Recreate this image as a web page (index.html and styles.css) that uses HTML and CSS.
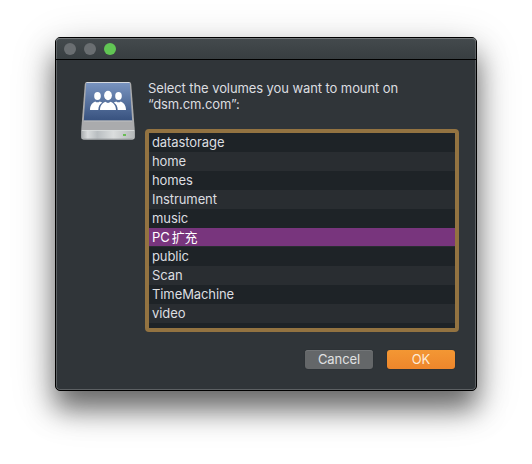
FILE: index.html
```html
<!DOCTYPE html>
<html lang="en">
<head>
<meta charset="utf-8">
<title>Select volumes</title>
<link rel="stylesheet" href="styles.css">
</head>
<body>
<main class="window">
  <header class="titlebar">
    <span class="light"></span>
    <span class="light"></span>
    <span class="light light-zoom"></span>
  </header>
  <div class="content">
    <svg class="drive" width="56" height="62" viewBox="0 0 56 62" aria-hidden="true">
      <defs>
        <linearGradient id="label" x1="0" y1="0" x2="0" y2="1">
          <stop offset="0" stop-color="#7893bf"/>
          <stop offset="1" stop-color="#38527f"/>
        </linearGradient>
        <linearGradient id="front" x1="0" y1="0" x2="1" y2="0">
          <stop offset="0" stop-color="#a9adaf"/>
          <stop offset=".12" stop-color="#d9dcdd"/>
          <stop offset=".3" stop-color="#b9bec1"/>
          <stop offset=".6" stop-color="#dadddd"/>
          <stop offset="1" stop-color="#b4b8b9"/>
        </linearGradient>
      </defs>
      <path d="M7 2H49Q51 2 51.200 4L54.700 49V57Q54.700 59.500 52 59.500H4Q1.300 59.500 1.300 57V49L4.800 4Q5 2 7 2Z" fill="#aaabad"/>
      <path d="M6.500 2.500H49.500" stroke="#d4d8de"/>
      <path d="M6.200 3H49.800L52.200 40.500H3.800Z" fill="url(#label)"/>
      <path d="M4 41H52" stroke="#c7c9cc" stroke-width=".7"/>
      <path d="M1.300 50H54.700V57Q54.700 59.500 52 59.500H4Q1.300 59.500 1.300 57Z" fill="url(#front)"/>
      <path d="M2 50.500H54" stroke="#dcdfe0" stroke-width=".8"/>
      <path d="M3.500 59.100H52.500" stroke="#8b9092" stroke-width=".8"/>
      <rect x="43" y="54" width="3" height="2" fill="#69bd55"/>
      <g fill="#fff">
        <ellipse cx="17.500" cy="16" rx="3.300" ry="4"/>
        <ellipse cx="38.500" cy="16" rx="3.300" ry="4"/>
        <path d="M10 30C10 24.500 13 22.500 15.200 21.500Q17.500 23.200 19.800 21.500L22.200 22.600C19.500 24.500 18.500 26.500 18.300 30Z"/>
        <path d="M46 30C46 24.500 43 22.500 40.800 21.500Q38.500 23.200 36.200 21.500L33.800 22.600C36.500 24.500 37.500 26.500 37.700 30Z"/>
        <ellipse cx="28" cy="15.500" rx="3.900" ry="4.700"/>
        <path d="M20 30C20 25 23 23 25.300 21.800Q28 24 30.700 21.800C33 23 36 25 36 30Z"/>
      </g>
    </svg>
    <section class="main">
      <p class="prompt">Select the volumes you want to mount on<br>“dsm.cm.com”:</p>
      <ul class="volumes">
        <li>datastorage</li>
        <li>home</li>
        <li>homes</li>
        <li>Instrument</li>
        <li>music</li>
        <li class="selected">PC<span class="cjk">扩充</span></li>
        <li>public</li>
        <li>Scan</li>
        <li>TimeMachine</li>
        <li>video</li>
      </ul>
      <div class="actions">
        <button class="button">Cancel</button>
        <button class="button button-primary">OK</button>
      </div>
    </section>
  </div>
</main>
</body>
</html>
```

FILE: styles.css
```css
* { box-sizing: border-box; }

body {
  margin: 0;
  height: 464px;
  padding: 37px 55px;
  overflow: hidden;
  background: #fff;
  color: #dcdee0;
  font: 13px/16px Inter, "Noto Sans CJK SC", sans-serif;
  letter-spacing: -.09px;
}

.window {
  width: 422px;
  height: 354px;
  border: 1px solid #000;
  border-radius: 5px;
  background: #303539;
  box-shadow: inset 0 0 0 1px #5c6063, 0 18px 27px rgba(0, 0, 0, .5), 0 12px 45px rgba(0, 0, 0, .22);
}

.titlebar {
  display: flex;
  gap: 8px;
  height: 22px;
  padding: 5px 8px;
  border-bottom: 1px solid #000;
  border-radius: 4px 4px 0 0;
  background: linear-gradient(#444a4d, #383e41);
  box-shadow: inset 0 1px #74787a, inset 1px 0 #5c6063, inset -1px 0 #5c6063;
}

.light {
  width: 12px;
  height: 12px;
  border-radius: 50%;
  background: #6a6e71;
}

.light-zoom { background: #61c554; }

.content {
  display: flex;
  padding: 20px 17px 0 24px;
}

.drive {
  flex: none;
  margin-right: 9px;
}

.main { flex: 1; }

.prompt {
  margin: 0 0 17px 3px;
  white-space: nowrap;
}

.volumes {
  width: 314px;
  height: 203px;
  margin: 0;
  padding: 0;
  border: 4px solid #937341;
  border-radius: 4px;
  overflow: hidden;
  list-style: none;
  background: #1e2327;
}

.volumes li {
  height: 19px;
  padding-left: 3px;
  line-height: 18px;
  white-space: nowrap;
}

.volumes li:nth-child(even) { background: #292d31; }

.volumes li.selected {
  border-bottom: 1px solid #292d31;
  background: #78357d;
  color: #fff;
}

.cjk {
  margin-left: 2px;
  font-family: "Noto Sans CJK SC", sans-serif;
  line-height: 1;
}

.actions {
  display: flex;
  justify-content: flex-end;
  gap: 14px;
  width: 310px;
  margin-top: 18px;
}

.button {
  width: 68px;
  height: 19px;
  padding: 0;
  border: 0;
  border-radius: 3px;
  background: #646769;
  color: #e0e1e2;
  font: 13px/19px Inter, sans-serif;
  letter-spacing: -.09px;
  box-shadow: 0 0 1px rgba(0, 0, 0, .5), inset 0 1px #727577;
}

.button-primary {
  background: linear-gradient(#f39734, #ee862b);
  box-shadow: 0 0 1px rgba(0, 0, 0, .5);
  color: #fdebd6;
}
```
